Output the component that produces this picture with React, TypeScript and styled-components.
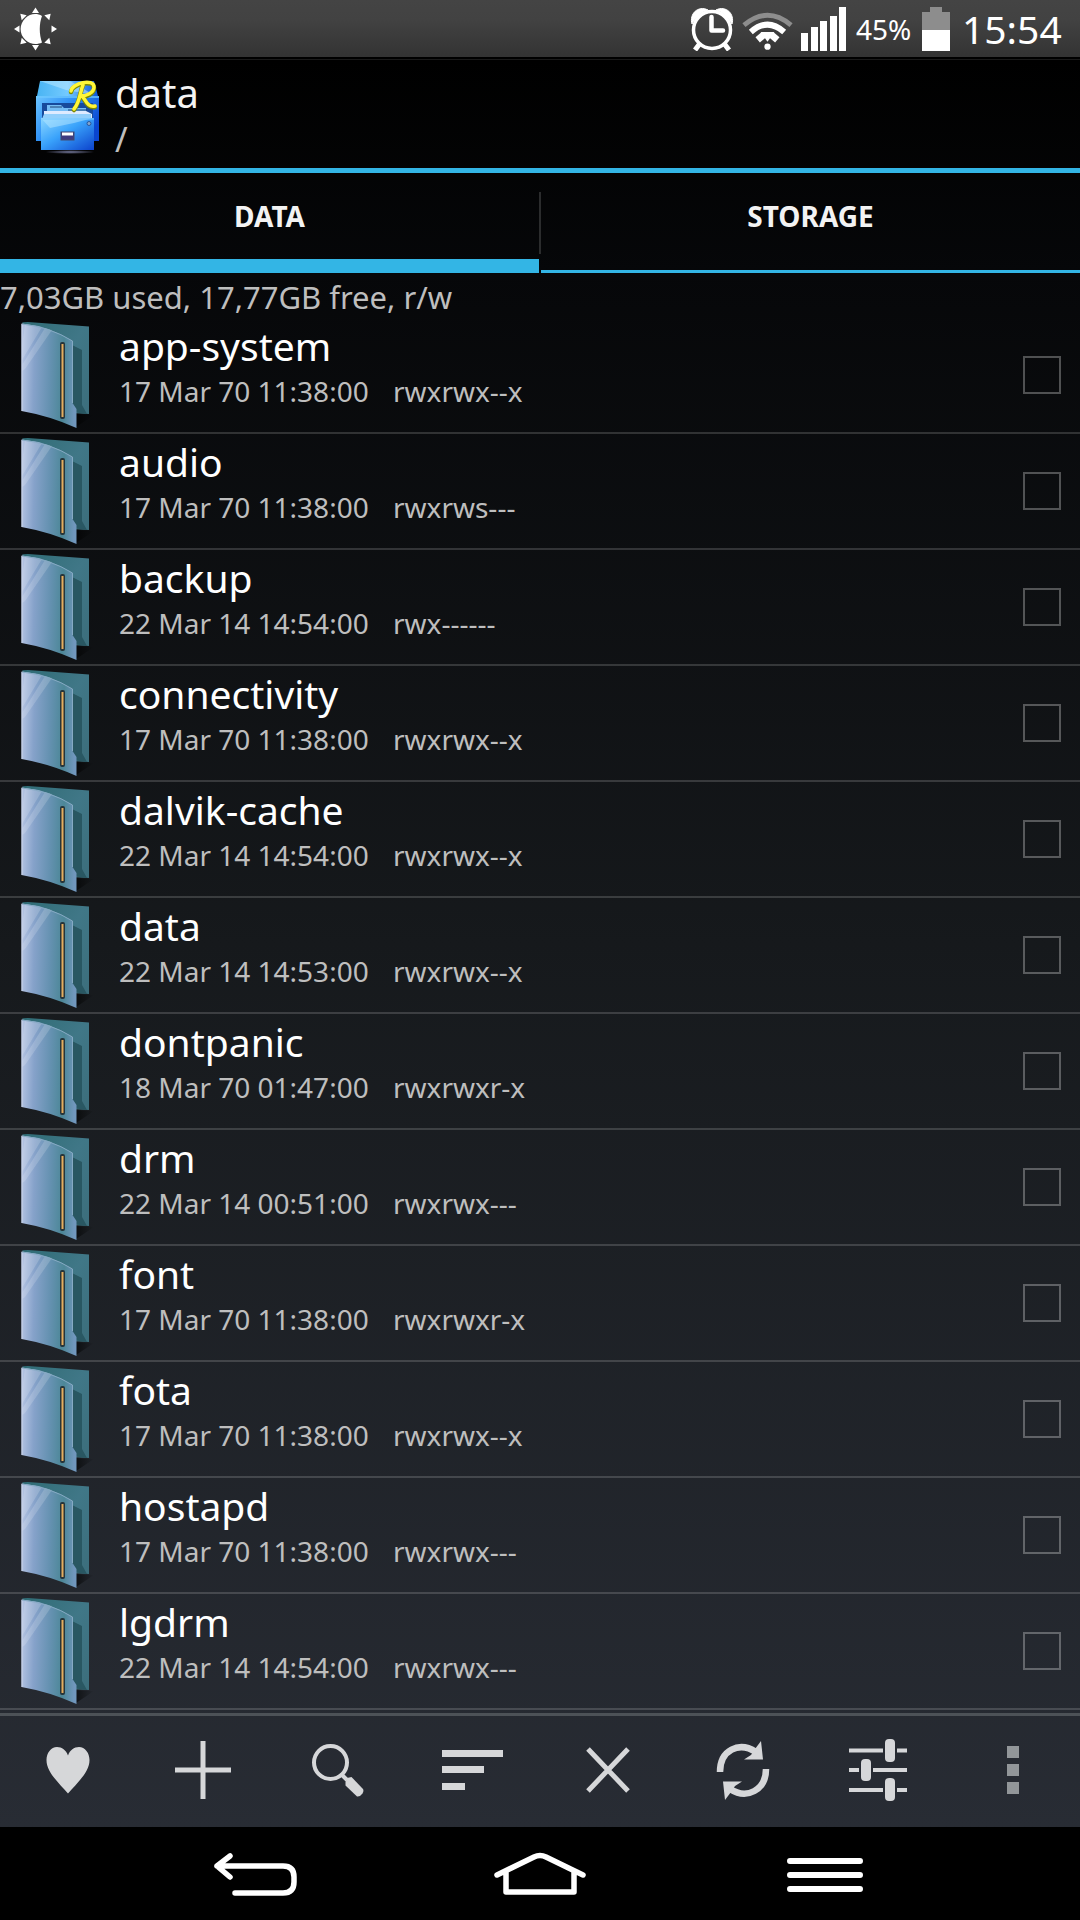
import React from "react";
import styled, { createGlobalStyle } from "styled-components";

const GlobalStyle = createGlobalStyle`
  * { box-sizing: border-box; }
  html { background: #000; }
  body { margin: 0; font-family: "Noto Sans", "Open Sans", sans-serif; color: #fff; }
  button { font: inherit; color: inherit; background: none; border: 0; padding: 0; margin: 0; }
  h1, h2, p, ul { margin: 0; padding: 0; font-weight: 400; }
  ul { list-style: none; }
  svg { display: block; flex: none; }
`;

const Screen = styled.div`
  display: flex;
  flex-direction: column;
  min-height: 100vh;
`;

const StatusBar = styled.header`
  display: flex;
  align-items: center;
  height: 60px;
  padding: 0 18px 2px 14px;
  background: linear-gradient(#444 0, #424242 20px, #333 57px, #000 57px, #000 59px, #1a1a1a 59px, #1a1a1a 60px);
`;

const StatusIcons = styled.div`
  display: flex;
  align-items: center;
  margin-left: auto;
`;

const IconGroup = styled.div`
  display: flex;
  align-items: center;
  gap: 8px;
`;

const BatteryText = styled.span`
  width: 75px;
  padding-left: 9px;
  font-size: 28px;
  line-height: 40px;
`;

const Clock = styled.time`
  width: 112px;
  padding-left: 12px;
  font-size: 39px;
  line-height: 40px;
`;

const AppArea = styled.main`
  flex: 1;
  display: flex;
  flex-direction: column;
  background: linear-gradient(#000, #060709 12%, #16191c 50%, #282c34);
`;

const TitleBar = styled.div`
  display: flex;
  align-items: center;
  height: 113px;
  padding: 6px 0 0 36px;
  border-bottom: 5px solid #33b5e5;
`;

const TitleText = styled.div`
  padding-left: 15px;
`;

const Title = styled.h1`
  font-size: 40px;
  line-height: 44px;
  color: #f3f3f3;
`;

const Path = styled.p`
  font-size: 34px;
  line-height: 48px;
  color: #bebebe;
`;

const Tabs = styled.div`
  display: grid;
  grid-template-columns: 1fr 2px 1fr;
  height: 100px;
`;

const Tab = styled.button<{ $active?: boolean }>`
  && {
    border-bottom: ${(p) => (p.$active ? "14px" : "3px")} solid #33b5e5;
    padding-bottom: ${(p) => (p.$active ? "0" : "11px")};
    font-size: 28px;
    line-height: 32px;
    font-weight: 700;
    color: #f3f3f3;
  }
`;

const TabDivider = styled.span`
  margin: 19px 0;
  background: #2b2c2d;
`;

const Usage = styled.p`
  height: 45px;
  font-size: 31px;
  line-height: 48px;
  color: #bebebe;
`;

const Row = styled.li`
  display: flex;
  align-items: flex-start;
  height: 116px;
  padding: 3px 19px 0 20px;
  border-bottom: 2px solid rgba(255, 255, 255, 0.16);
`;

const Details = styled.div`
  flex: 1;
  padding-left: 25px;
`;

const Name = styled.h2`
  font-size: 39px;
  line-height: 50px;
`;

const Meta = styled.div`
  display: flex;
  font-size: 28px;
  line-height: 40px;
  color: #bebebe;
`;

const DateText = styled.time`
  width: 274px;
`;

const Check = styled.input`
  appearance: none;
  width: 38px;
  height: 38px;
  margin: 35px 0 0;
  border: 2px solid rgba(255, 255, 255, 0.29);
`;

const Toolbar = styled.div`
  display: grid;
  grid-template-columns: repeat(8, 1fr);
  height: 114px;
  margin-top: 3px;
  padding-bottom: 4px;
  border-top: 3px solid #4d5257;
  color: #d6d7d9;
`;

const NavBar = styled.nav`
  display: flex;
  justify-content: center;
  height: 93px;
  background: #000;
`;

const IconButton = styled.button`
  display: flex;
  align-items: center;
  justify-content: center;
`;

const NavButton = styled(IconButton)`
  width: 285px;
`;

const BrightnessIcon = () => (
  <svg width="44" height="44" viewBox="0 0 44 44" fill="#fff">
    <path d="M28 9C23 6 16 6.500 11.500 11C5 17 5 27 11.500 33C16 37.500 23 38 28 35.500C25 27 25 17 28 9Z" />
    {[0, 45, 90, 135, 180, 225, 270, 315].map((a) => (
      <path key={a} d="M21.500 .5L25 6H18Z" transform={`rotate(${a} 21.500 22)`} />
    ))}
  </svg>
);

const AlarmIcon = () => (
  <svg width="44" height="44" viewBox="0 0 44 44" fill="none" stroke="#fff">
    <circle cx="22" cy="23" r="18.500" strokeWidth="3.500" />
    <path d="M2 17C-1 7 8 -2 18 3C11 5 6 10 2 17ZM42 17C45 7 36 -2 26 3C33 5 38 10 42 17Z" fill="#fff" strokeWidth="1" />
    <path d="M21.500 10V23.500H33" strokeWidth="4.500" strokeLinejoin="round" strokeLinecap="round" />
    <path d="M9.500 37L5 43M34.500 37L39 43" strokeWidth="5" />
  </svg>
);

const WifiIcon = () => (
  <svg width="51" height="44" viewBox="0 0 52 44" fill="none" stroke="#fff">
    <path d="M2 18Q26 -2 50 18" stroke="#8d8d8d" strokeWidth="5" />
    <path d="M9 25Q26 10 43 25" strokeWidth="6" />
    <path d="M16 33L22 28M36 33L30 28" strokeWidth="7" />
    <path d="M19 25H33L26 35Z" fill="#fff" stroke="none" />
    <circle cx="26" cy="40" r="3.200" fill="#fff" stroke="none" />
  </svg>
);

const SignalIcon = () => (
  <svg width="46" height="44" viewBox="0 0 46 44" fill="#fff">
    <path d="M0 26H7V44H0ZM10 20H17V44H10ZM19 14H26V44H19ZM29 9H36V44H29ZM38 0H45V44H38Z" />
  </svg>
);

const BatteryIcon = () => (
  <svg width="28" height="44" viewBox="0 0 28 44">
    <path d="M8 0H20V5H28V23H0V5H8Z" fill="#8d8d8d" />
    <path d="M0 23H28V44H0Z" fill="#fff" />
  </svg>
);

const AppIcon = () => (
  <svg width="64" height="74" viewBox="0 0 64 74">
    <defs>
      <linearGradient id="cab" x2="1" y2=".6">
        <stop stopColor="#6cc5ff" /><stop offset=".5" stopColor="#2a8cf5" /><stop offset="1" stopColor="#0a45d0" />
      </linearGradient>
      <linearGradient id="front" x2="1" y2="1">
        <stop stopColor="#8bd6ff" /><stop offset=".45" stopColor="#39a2fb" /><stop offset="1" stopColor="#0c42cc" />
      </linearGradient>
      <linearGradient id="roof" x2="1">
        <stop stopColor="#49b4f3" /><stop offset=".5" stopColor="#74caff" /><stop offset="1" stopColor="#0c54da" />
      </linearGradient>
      <radialGradient id="base"><stop stopColor="#777b9f" /><stop offset="1" stopColor="#777b9f" stopOpacity="0" /></radialGradient>
    </defs>
    <ellipse cx="34" cy="72" rx="25" ry="2" fill="url(#base)" />
    <path d="M4 1H58L62 16H1Z" fill="url(#roof)" />
    <path d="M4 1H34L58 15L30 10L4 1Z" fill="#b8e7ff" opacity=".55" />
    <rect y="16" width="63" height="45" fill="url(#cab)" />
    <path d="M0 16H63V18H0Z" fill="#6ec9ff" opacity=".7" />
    <rect x="6" y="23" width="51" height="15" fill="#174a9c" />
    <path d="M11 25H25L28 28H50V37H11Z" fill="#75bdf5" />
    <path d="M14 27H26M32 30H51" stroke="#214477" />
    <path d="M8 31H50L56 34V39H8Z" fill="#deebff" />
    <path d="M8 34H55V39H6Z" fill="#91cffb" />
    <path d="M5 38H58V70H5Z" fill="url(#front)" />
    <path d="M5 38H57L38 43L14 48Z" fill="#b8e7ff" opacity=".5" />
    <path d="M5 39H58" stroke="#79c9ff" />
    <rect x="25" y="52" width="13" height="8" fill="#3f3b80" stroke="#424a70" />
    <path d="M26 54H37" stroke="#fff" strokeWidth="3" />
    <circle cx="53" cy="43.500" r="2" fill="#88a6ca" stroke="#27569e" />
    <g fill="none" strokeLinecap="round" strokeLinejoin="round">
      <path d="M35 12C36 4 58 -1 58 8C58 14 50 17 45 17C49 17 50 29 59 27M47 5C44 12 44 22 38 30" stroke="#7c8800" strokeWidth="4.500" />
      <path d="M35 11C36 3 58 -2 58 7C58 13 50 16 45 16C49 16 50 28 59 26M47 5C44 12 44 22 38 29" stroke="#fff638" strokeWidth="3.500" />
    </g>
  </svg>
);

const FolderIcon = () => (
  <svg width="74" height="110" viewBox="0 0 74 110">
    <defs>
      <linearGradient id="cover" x2="1" y2=".05">
        <stop stopColor="#b9c7e5" /><stop offset=".25" stopColor="#86a2ca" /><stop offset=".55" stopColor="#6491b0" /><stop offset=".78" stopColor="#4c8797" /><stop offset="1" stopColor="#7197bd" />
      </linearGradient>
      <linearGradient id="back" x2="1" y2="1">
        <stop stopColor="#2f6c75" /><stop offset=".5" stopColor="#407787" /><stop offset="1" stopColor="#3c6e7c" />
      </linearGradient>
      <linearGradient id="floor" x2="1"><stop stopColor="#000" stopOpacity=".6" /><stop offset="1" stopColor="#000" stopOpacity="0" /></linearGradient>
    </defs>
    <path d="M55 93L74 94L56 106Z" fill="url(#floor)" />
    <path d="M2 2Q2 1 8 1L69 5.500V93L52 92L40 30Z" fill="url(#back)" />
    <path d="M52 24L62 29V84L67 93L52 91Z" fill="#295762" />
    <path d="M1.500 2.500Q30 5 52.500 20V82L56.500 88V107Q30 95 1.500 90Z" fill="url(#cover)" />
    <path d="M5 3L22 6L2 39V25ZM25 7L32 9L5 48L2 50V44Z" fill="#fff" opacity=".17" />
    <path d="M2 3V90" stroke="#cbd5ea" />
    <path d="M2 3Q30 6 52.500 20V82" stroke="#86aac4" fill="none" />
    <rect x="40" y="21" width="5" height="77" rx="2" fill="#26353a" />
    <path d="M42.500 23V96" stroke="#e4ad5e" strokeWidth="2" />
  </svg>
);

const HeartIcon = () => (
  <svg width="60" height="60" viewBox="0 0 60 60" fill="currentColor">
    <path d="M30 53.500C20 42 8.500 32 8.500 20C8.500 13 13 7 19 7C24 7 28 10 30 15.500C32 10 36 7 41 7C47 7 51.500 13 51.500 20C51.500 32 40 42 30 53.500Z" />
  </svg>
);

const PlusIcon = () => (
  <svg width="60" height="60" viewBox="0 0 60 60" stroke="currentColor" strokeWidth="5">
    <path d="M30 1V59M2 30H58" />
  </svg>
);

const SearchIcon = () => (
  <svg width="60" height="60" viewBox="0 0 60 60" fill="none" stroke="currentColor">
    <circle cx="22.500" cy="22.500" r="16.500" strokeWidth="4" />
    <path d="M33 34L39 40" strokeWidth="4" />
    <path d="M39 38L43.500 37L55 49Q56 51 54.500 53.500Q52 57 49 56.500L37.500 45.500V42Z" fill="currentColor" stroke="none" />
  </svg>
);

const SortIcon = () => (
  <svg width="62" height="60" viewBox="0 0 62 60" fill="currentColor">
    <path d="M0 10H61V17H0ZM0 26H42V33H0ZM0 43H23V50H0Z" />
  </svg>
);

const CloseIcon = () => (
  <svg width="60" height="60" viewBox="0 0 60 60" stroke="currentColor" strokeWidth="5">
    <path d="M10 9L50 51M50 9L10 51" />
  </svg>
);

const RefreshIcon = () => (
  <svg width="60" height="60" viewBox="0 0 60 60" fill="none" stroke="currentColor" strokeWidth="6.500">
    <path d="M7 32C7 10 26 1 43 12M53 29C53 50 34 60 17 49" />
    <path d="M48 1L50 19.500H31L38 15L42 9ZM12 60L10 41.500H29L22 46L18 52Z" fill="currentColor" stroke="none" />
  </svg>
);

const SlidersIcon = () => (
  <svg width="60" height="62" viewBox="0 0 60 62" fill="currentColor">
    <path d="M1 9.500H35V13.500H1ZM49 9.500H59V13.500H49ZM1 29H11V33H1ZM25 29H59V33H25ZM1 49H35V53H1ZM49 49H59V53H49Z" />
    <rect x="37" y="0" width="10" height="23" rx="4" />
    <rect x="13" y="20" width="10" height="22" rx="4" />
    <rect x="37" y="39" width="10" height="23" rx="4" />
  </svg>
);

const MoreIcon = () => (
  <svg width="12" height="48" viewBox="0 0 12 48" fill="#929699">
    <path d="M0 0H12V12H0ZM0 18H12V30H0ZM0 36H12V48H0Z" />
  </svg>
);

const BackIcon = () => (
  <svg width="84" height="44" viewBox="0 0 84 44" fill="none" stroke="#fff" strokeWidth="5.500" strokeLinecap="round" strokeLinejoin="round">
    <path d="M17 4L4 14L17 25M4 14H70Q81 14 81 25V30Q81 41 70 41H22" />
  </svg>
);

const HomeIcon = () => (
  <svg width="92" height="44" viewBox="0 0 92 44" fill="none" stroke="#fff" strokeWidth="5.500" strokeLinecap="round" strokeLinejoin="round">
    <path d="M3 23L40 5Q46 2 52 5L89 23M12 20V40H80V20" />
  </svg>
);

const MenuIcon = () => (
  <svg width="76" height="36" viewBox="0 0 76 36" stroke="#fff" strokeWidth="6" strokeLinecap="round">
    <path d="M3 5H73M3 19H73M3 33H73" />
  </svg>
);

const folders = [
  ["app-system", "17 Mar 70 11:38:00", "rwxrwx--x"],
  ["audio", "17 Mar 70 11:38:00", "rwxrws---"],
  ["backup", "22 Mar 14 14:54:00", "rwx------"],
  ["connectivity", "17 Mar 70 11:38:00", "rwxrwx--x"],
  ["dalvik-cache", "22 Mar 14 14:54:00", "rwxrwx--x"],
  ["data", "22 Mar 14 14:53:00", "rwxrwx--x"],
  ["dontpanic", "18 Mar 70 01:47:00", "rwxrwxr-x"],
  ["drm", "22 Mar 14 00:51:00", "rwxrwx---"],
  ["font", "17 Mar 70 11:38:00", "rwxrwxr-x"],
  ["fota", "17 Mar 70 11:38:00", "rwxrwx--x"],
  ["hostapd", "17 Mar 70 11:38:00", "rwxrwx---"],
  ["lgdrm", "22 Mar 14 14:54:00", "rwxrwx---"],
];

const actions = [
  ["Favourites", HeartIcon],
  ["Add", PlusIcon],
  ["Search", SearchIcon],
  ["Sort", SortIcon],
  ["Close", CloseIcon],
  ["Refresh", RefreshIcon],
  ["Settings", SlidersIcon],
  ["More", MoreIcon],
] as const;

export default function App() {
  return (
    <Screen>
      <GlobalStyle />
      <StatusBar>
        <BrightnessIcon />
        <StatusIcons>
          <IconGroup>
            <AlarmIcon />
            <WifiIcon />
            <SignalIcon />
          </IconGroup>
          <BatteryText>45%</BatteryText>
          <BatteryIcon />
          <Clock>15:54</Clock>
        </StatusIcons>
      </StatusBar>
      <AppArea>
        <TitleBar>
          <AppIcon />
          <TitleText>
            <Title>data</Title>
            <Path>/</Path>
          </TitleText>
        </TitleBar>
        <Tabs role="tablist">
          <Tab role="tab" aria-selected="true" $active>DATA</Tab>
          <TabDivider />
          <Tab role="tab" aria-selected="false">STORAGE</Tab>
        </Tabs>
        <Usage>7,03GB used, 17,77GB free, r/w</Usage>
        <ul>
          {folders.map(([name, date, mode]) => (
            <Row key={name}>
              <FolderIcon />
              <Details>
                <Name>{name}</Name>
                <Meta>
                  <DateText>{date}</DateText>
                  <span>{mode}</span>
                </Meta>
              </Details>
              <Check type="checkbox" aria-label={name} />
            </Row>
          ))}
        </ul>
        <Toolbar role="toolbar">
          {actions.map(([label, Icon]) => (
            <IconButton key={label} aria-label={label}>
              <Icon />
            </IconButton>
          ))}
        </Toolbar>
      </AppArea>
      <NavBar>
        <NavButton aria-label="Back"><BackIcon /></NavButton>
        <NavButton aria-label="Home"><HomeIcon /></NavButton>
        <NavButton aria-label="Menu"><MenuIcon /></NavButton>
      </NavBar>
    </Screen>
  );
}
